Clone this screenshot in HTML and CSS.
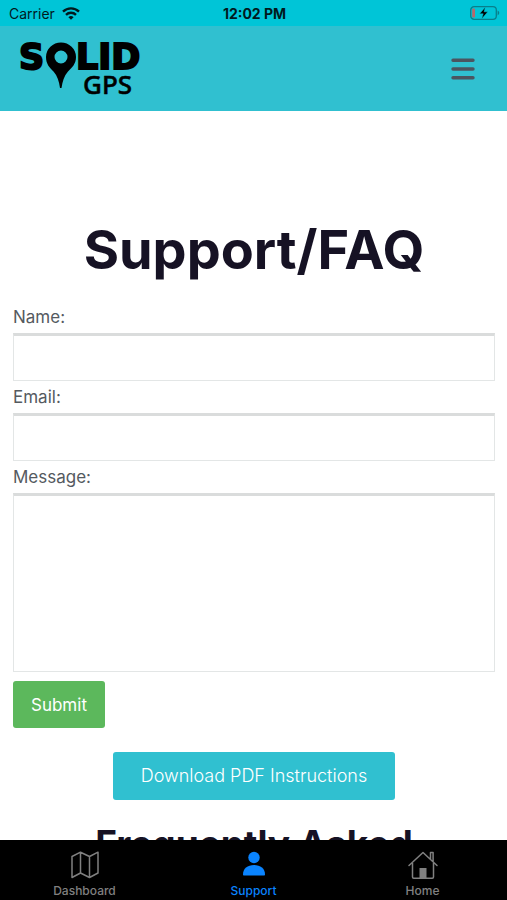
FILE: index.html
```html
<!DOCTYPE html>
<html lang="en">
<head>
  <meta charset="UTF-8">
  <meta name="viewport" content="width=device-width, initial-scale=1.0">
  <title>Support/FAQ</title>
  <link rel="stylesheet" href="styles.css">
</head>
<body>
  <div class="status-bar">
    <div class="carrier">
      <span>Carrier</span>
      <svg width="18" height="13" viewBox="0 0 18 13" fill="none" stroke="#001a1e" stroke-width="2.4">
        <path d="M1 4.6a11.5 11.5 0 0 1 16 0"/>
        <path d="M4 7.8a7.2 7.2 0 0 1 10 0"/>
        <path d="M9 12.8L6.4 10.2a3.8 3.8 0 0 1 5.2 0z" fill="#001a1e" stroke="none"/>
      </svg>
    </div>
    <span class="clock">12:02 PM</span>
    <div class="battery">
      <svg width="30" height="14" viewBox="0 0 30 14">
        <rect x="0.7" y="0.7" width="25.6" height="12.6" rx="3.4" fill="none" stroke="#087f8b" stroke-width="1.3"/>
        <path d="M27.6 4.6c2.2 1 2.2 3.8 0 4.8z" fill="#087f8b"/>
        <rect x="2.2" y="2.5" width="2.8" height="9" rx="1" fill="#b8676b"/>
        <path d="M15.4 1L9.6 7.8h3.6L11.6 13l6.2-7.2h-3.7z" fill="#000" stroke="#00c5d7" stroke-width="0.5"/>
      </svg>
    </div>
  </div>

  <header class="header">
    <a href="#" class="logo" aria-label="Solid GPS">
      <svg width="126" height="56" viewBox="0 0 126 56">
        <g class="logo-solid">
          <text x="0" y="28">S</text>
          <text x="57" y="28">LID</text>
        </g>
        <path fill-rule="evenodd" d="M42 1.5a15 14.5 0 0 1 15 14.5c0 7-4 10.5-8 14.5-4 4.5-5.5 10-6.500 16.500h-1.500c-1-6.500-2.500-12-6.500-16.500-4-4-7.500-7.500-7.500-14.500a15 14.500 0 0 1 15-14.500zM42 9.500a6.500 6.500 0 1 0 0 13a6.500 6.500 0 1 0 0-13z"/>
        <text class="logo-gps" x="64" y="53">GPS</text>
      </svg>
    </a>
    <button type="button" class="menu-btn" aria-label="Menu">
      <svg width="24" height="22" viewBox="0 0 24 22" stroke="#4b5560" stroke-width="3.4" stroke-linecap="round">
        <path d="M2 2.200h20M2 11h20M2 19.800h20"/>
      </svg>
    </button>
  </header>

  <main class="content">
    <h1>Support/FAQ</h1>
    <form class="contact-form">
      <label for="name">Name:</label>
      <input type="text" id="name" name="name">
      <label for="email">Email:</label>
      <input type="email" id="email" name="email">
      <label for="message">Message:</label>
      <textarea id="message" name="message"></textarea>
      <button type="submit" class="submit-btn">Submit</button>
    </form>
    <a href="#" class="download-btn">Download PDF Instructions</a>
    <h2>Frequently Asked</h2>
  </main>

  <nav class="tab-bar">
    <a href="#" class="tab">
      <svg width="28" height="28" viewBox="0 0 28 28" fill="none" stroke="#808080" stroke-width="1.5" stroke-linejoin="round">
        <path d="M1 5.500L9.500 1.200L18.500 5.500L27 1.200V22L18.500 26.500L9.500 22L1 26.500zM9.500 1.200V22M18.500 5.500V26.500"/>
      </svg>
      <span>Dashboard</span>
    </a>
    <a href="#" class="tab active">
      <svg width="28" height="28" viewBox="0 0 28 28" fill="#0a84ff">
        <circle cx="14" cy="6.500" r="5.700"/>
        <path d="M3 23.500c0-6 4.500-9.500 11-9.500s11 3.500 11 9.500c0 .6-.4 1-1 1H4c-.6 0-1-.4-1-1z"/>
      </svg>
      <span>Support</span>
    </a>
    <a href="#" class="tab">
      <svg width="30" height="28" viewBox="0 0 30 28" fill="none" stroke="#808080" stroke-width="1.5" stroke-linecap="round" stroke-linejoin="round">
        <path d="M1 14.500L15 1.500L29 14.500M4.500 12v14q0 1.200 1.200 1.200h18.600q1.200 0 1.200-1.200V12M22.500 8V1.500h2.600v9"/>
        <path d="M11.500 27V17h7v10z" fill="#808080" stroke="none"/>
      </svg>
      <span>Home</span>
    </a>
  </nav>
</body>
</html>
```

FILE: styles.css
```css
*{
  box-sizing: border-box;
}
body{
  margin: 0;
  height: 100vh;
  display: flex;
  flex-direction: column;
  background: #fff;
  color: #555a5f;
  font-family: Inter, "Liberation Sans", sans-serif;
  font-size: 17px;
}
a{
  text-decoration: none;
}
svg{
  display: block;
  overflow: visible;
}

/* status bar */
.status-bar{
  flex: none;
  height: 26px;
  padding: 0 7px 0 9px;
  display: flex;
  align-items: center;
  background: #00c5d7;
  color: #001a1e;
  font-size: 14px;
}
.carrier, .battery{
  flex: 1;
  display: flex;
  align-items: center;
  gap: 7px;
}
.battery{
  justify-content: flex-end;
}
.clock{
  font-size: 14px;
  font-weight: 700;
}

/* header */
.header{
  flex: none;
  height: 85px;
  padding: 0 32px 0 19px;
  display: flex;
  align-items: center;
  justify-content: space-between;
  background: #30c0d0;
}
.logo-solid{
  font-family: "DejaVu Sans", sans-serif;
  font-size: 35px;
  font-weight: 700;
  stroke: #000;
  stroke-width: 2px;
}
.logo-gps{
  font-family: "Noto Sans", sans-serif;
  font-size: 26px;
  font-weight: 500;
  stroke: #000;
  stroke-width: 0.5;
}
.menu-btn{
  padding: 0;
  border: 0;
  background: none;
}

/* content */
.content{
  flex: 1;
  min-height: 0;
  overflow: hidden;
  padding: 104px 12px 0 13px;
}
h1, h2{
  margin: 0;
  color: #161224;
  text-align: center;
  font-weight: 700;
}
h1{
  font-size: 54px;
  line-height: 70px;
}
h2{
  font-size: 37px;
  line-height: 48px;
}
.contact-form{
  display: flex;
  flex-direction: column;
  margin-top: 16px;
}
.contact-form label{
  line-height: 32px;
}
.contact-form input,
.contact-form textarea{
  width: 100%;
  height: 48px;
  padding: 8px;
  border: 1px solid #e3e6e6;
  border-top: 3px solid #dadcdc;
  border-radius: 0;
  background: #fff;
  font: inherit;
  outline: none;
}
.contact-form textarea{
  height: 179px;
  resize: none;
}
.submit-btn{
  align-self: flex-start;
  height: 47px;
  margin-top: 9px;
  padding: 0 18px;
  border: 0;
  border-radius: 3px;
  background: #5cb85c;
  color: #fff;
  font: inherit;
}
.download-btn{
  display: block;
  width: fit-content;
  margin: 24px auto 20px;
  padding: 0 28px;
  border-radius: 3px;
  background: #30c0d0;
  color: #fff;
  font-size: 18px;
  font-weight: 300;
  line-height: 48px;
}

/* tab bar */
.tab-bar{
  flex: none;
  height: 60px;
  padding-top: 11px;
  display: flex;
  background: #000;
}
.tab{
  flex: 1;
  display: flex;
  flex-direction: column;
  align-items: center;
  gap: 4px;
  color: #808080;
  font-size: 12px;
  font-weight: 500;
  line-height: 16px;
}
.tab.active{
  color: #0a84ff;
}
```
